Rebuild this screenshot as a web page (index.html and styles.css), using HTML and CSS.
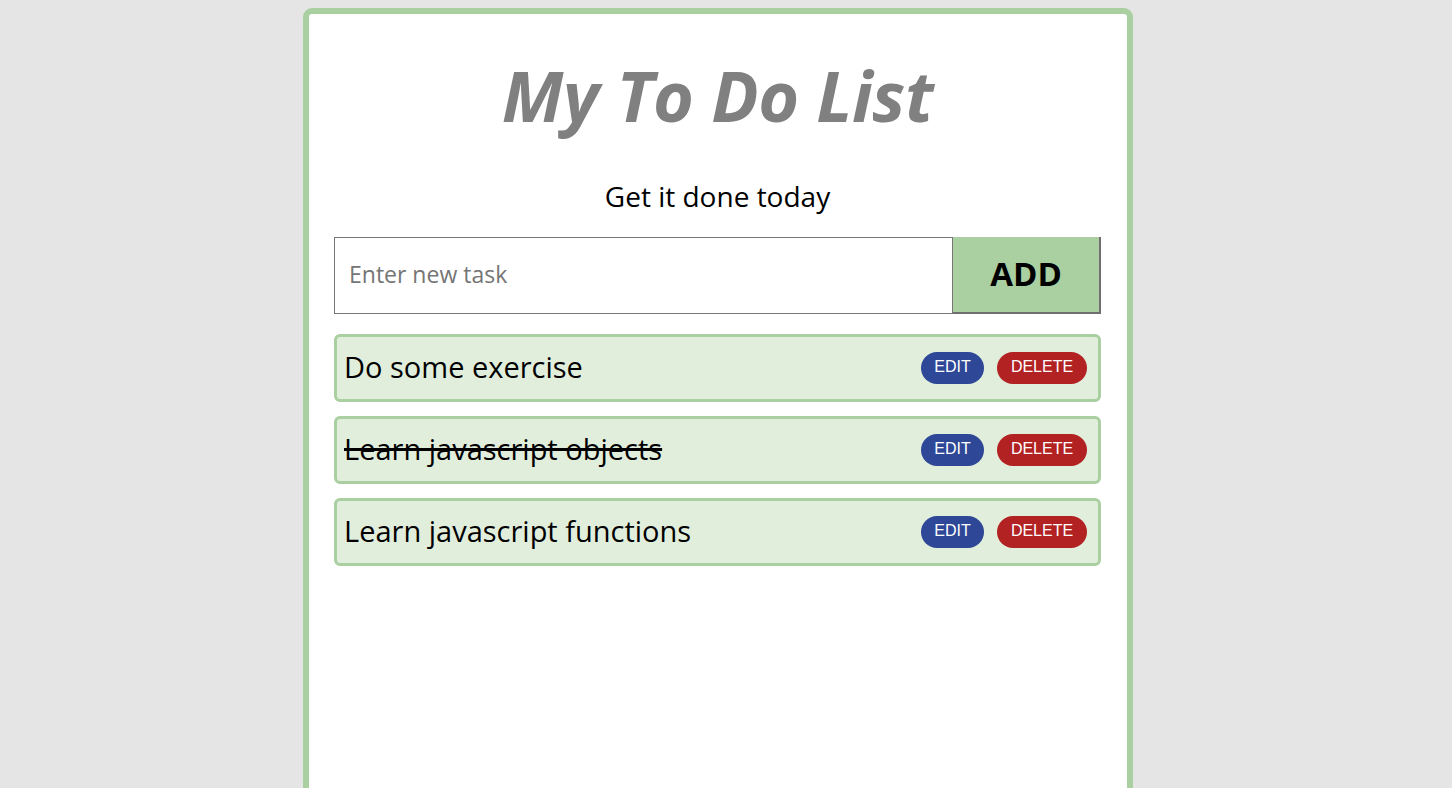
FILE: index.html
```html
<!DOCTYPE html>
<html lang="en">
<head>
<meta charset="utf-8">
<title>My To Do List</title>
<link rel="stylesheet" href="styles.css">
</head>
<body>
<main class="card">
  <h1 class="title">My To Do List</h1>
  <p class="subtitle">Get it done today</p>
  <form class="add-form">
    <input class="task-input" type="text" placeholder="Enter new task">
    <button class="add-btn" type="button">ADD</button>
  </form>
  <ul class="tasks">
    <li class="task">
      <span class="task-text">Do some exercise</span>
      <span class="actions"><button class="btn edit" type="button">EDIT</button><button class="btn delete" type="button">DELETE</button></span>
    </li>
    <li class="task">
      <span class="task-text done">Learn javascript objects</span>
      <span class="actions"><button class="btn edit" type="button">EDIT</button><button class="btn delete" type="button">DELETE</button></span>
    </li>
    <li class="task">
      <span class="task-text">Learn javascript functions</span>
      <span class="actions"><button class="btn edit" type="button">EDIT</button><button class="btn delete" type="button">DELETE</button></span>
    </li>
  </ul>
</main>
</body>
</html>
```
FILE: styles.css
```css
html, body {
  margin: 0;
  height: 100%;
}
body {
  background: #e5e5e5;
  padding: 8px 0 0 0;
  box-sizing: border-box;
  overflow: hidden;
  font-family: "Open Sans", "Noto Sans", sans-serif;
}
.card {
  box-sizing: border-box;
  width: 830px;
  min-height: 900px;
  margin-left: 303px;
  background: #fff;
  border: 6px solid #aacfa0;
  border-radius: 9px;
  padding: 39px 26px 0 25px;
}
.title {
  margin: 0;
  text-align: center;
  font-size: 70px;
  font-style: italic;
  font-weight: 700;
  color: #808080;
  line-height: 84px;
  letter-spacing: -0.5px;
}
.subtitle {
  margin: 41px 0 0 0;
  text-align: center;
  font-size: 28px;
  line-height: 36px;
  color: #000;
}
.add-form {
  display: flex;
  margin-top: 23px;
  height: 77px;
}
.task-input {
  flex: 1;
  box-sizing: border-box;
  height: 77px;
  border: 1px solid #767676;
  padding: 0 14px 3px 14px;
  font-family: inherit;
  font-size: 23px;
  color: #000;
  outline: none;
}
.task-input::placeholder {
  color: #757575;
}
.add-btn {
  box-sizing: border-box;
  width: 148px;
  height: 77px;
  background: #aacfa0;
  border: none;
  border-right: 2px solid #6f6f6f;
  border-bottom: 2px solid #6f6f6f;
  font-family: inherit;
  font-size: 33px;
  font-weight: 700;
  color: #000;
  padding: 0 0 3px 0;
}
.tasks {
  list-style: none;
  margin: 20px 0 0 0;
  padding: 0;
  display: flex;
  flex-direction: column;
  gap: 14px;
}
.task {
  box-sizing: border-box;
  height: 68px;
  display: flex;
  align-items: center;
  justify-content: space-between;
  background: #e1eedc;
  border: 3px solid #aacfa0;
  border-radius: 6px;
  padding: 0 11px 4px 7px;
}
.task-text {
  font-size: 29px;
  color: #000;
}
.task-text.done {
  text-decoration: line-through;
  text-decoration-thickness: 3px;
}
.actions {
  display: flex;
  gap: 13px;
  margin-top: 4px;
}
.btn {
  height: 32px;
  border: none;
  border-radius: 16px;
  color: #fff;
  font-family: "Liberation Sans", Arial, sans-serif;
  font-size: 16px;
  padding: 0 0 2px 0;
}
.btn.edit {
  width: 63px;
  background: #2e4797;
}
.btn.delete {
  width: 90px;
  background: #b22222;
}
```
